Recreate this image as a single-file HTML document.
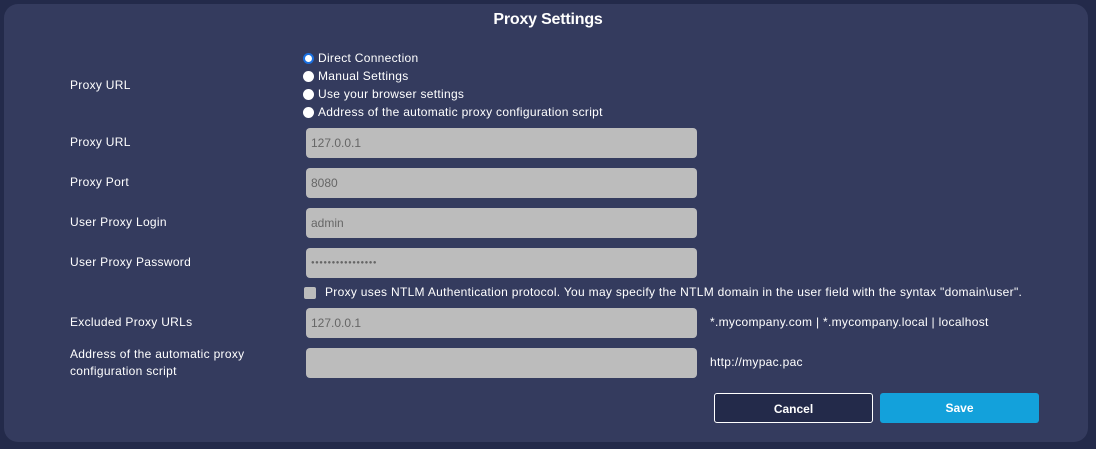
<!DOCTYPE html>
<html><head><style>
html,body{margin:0;padding:0;width:1096px;height:449px;background:#232a4a;overflow:hidden;font-family:"Liberation Sans",sans-serif;color:#fff}
.panel{position:absolute;left:4px;top:4px;width:1084px;height:438px;background:#343b5e;border-radius:14px}
.t{position:absolute;font-size:12px;white-space:nowrap;letter-spacing:0.3px}
h1{position:absolute;left:0;width:1096px;top:11px;margin:0;text-align:center;font-size:16px;font-weight:bold;letter-spacing:-0.2px}
.inp{position:absolute;left:306px;width:391px;height:30px;background:#bcbcbc;border-radius:4px;color:#666;font-size:12px;line-height:30px;padding-left:5px;box-sizing:border-box}
.rad{position:absolute;left:303px;width:11px;height:11px;border-radius:50%;background:#fff}
.btn{position:absolute;top:393px;width:159px;height:30px;border-radius:3px;font-size:12px;font-weight:bold;text-align:center;line-height:30px;box-sizing:border-box}
</style></head><body>
<div class="panel"></div>
<h1>Proxy Settings</h1>
<div class="rad" style="top:53px;background:#fff;border:2px solid #1a6fe0;box-sizing:border-box"></div>
<div class="t" style="left:318px;top:51px">Direct Connection</div>
<div class="rad" style="top:71px"></div>
<div class="t" style="left:318px;top:69px">Manual Settings</div>
<div class="rad" style="top:89px"></div>
<div class="t" style="left:318px;top:87px">Use your browser settings</div>
<div class="rad" style="top:107px"></div>
<div class="t" style="left:318px;top:105px">Address of the automatic proxy configuration script</div>
<div class="t" style="left:70px;top:78px">Proxy URL</div>
<div class="t" style="left:70px;top:135px">Proxy URL</div>
<div class="inp" style="top:128px">127.0.0.1</div>
<div class="t" style="left:70px;top:175px">Proxy Port</div>
<div class="inp" style="top:168px">8080</div>
<div class="t" style="left:70px;top:215px">User Proxy Login</div>
<div class="inp" style="top:208px">admin</div>
<div class="t" style="left:70px;top:255px">User Proxy Password</div>
<div class="inp" style="top:248px;font-size:6px;letter-spacing:0.5px">●●●●●●●●●●●●●●●●</div>
<div style="position:absolute;left:304px;top:287px;width:12px;height:12px;background:#bcbcbc;border-radius:2px"></div>
<div class="t" style="left:325px;top:285px">Proxy uses NTLM Authentication protocol. You may specify the NTLM domain in the user field with the syntax "domain\user".</div>
<div class="t" style="left:70px;top:315px">Excluded Proxy URLs</div>
<div class="inp" style="top:308px">127.0.0.1</div>
<div class="t" style="left:710px;top:315px">*.mycompany.com | *.mycompany.local | localhost</div>
<div class="t" style="left:70px;top:346px;line-height:17px">Address of the automatic proxy<br>configuration script</div>
<div class="inp" style="top:348px"></div>
<div class="t" style="left:710px;top:355px">http://mypac.pac</div>
<div class="btn" style="left:714px;background:#232a4a;border:1px solid #fff">Cancel</div>
<div class="btn" style="left:880px;background:#13a1db">Save</div>
</body></html>
